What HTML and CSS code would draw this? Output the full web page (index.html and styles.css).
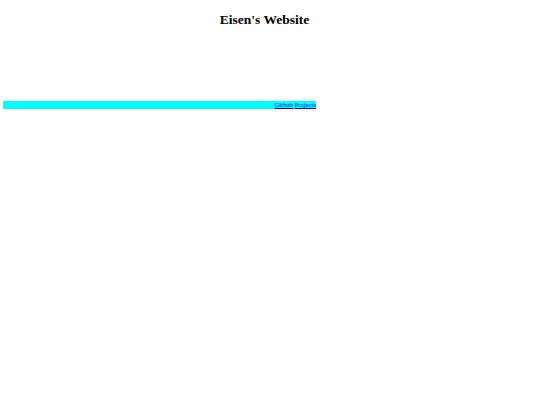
FILE: index.html
```html
<!DOCTYPE html>
<html>
<head>
<meta charset="utf-8">
<title>Eisen's Website</title>
<link rel="stylesheet" href="styles.css">
</head>
<body>
<div class="page">
  <h1 class="title">Eisen's Website</h1>
  <nav class="navbar">
    <a class="navlink" href="#">Github</a>
    <a class="navlink" href="#">Projects</a>
  </nav>
</div>
</body>
</html>
```
FILE: styles.css
```css
html, body {
  margin: 0;
  padding: 0;
  background: #ffffff;
}
.page {
  width: 529px;
  font-family: "Liberation Serif", "Times New Roman", serif;
}
.title {
  margin: 0;
  padding-top: 12px;
  font-size: 13.5px;
  font-weight: bold;
  text-align: center;
  color: #000;
  line-height: 16px;
}
.navbar {
  margin-top: 73px;
  margin-left: 3px;
  width: 313px;
  height: 8px;
  background: #00ffff;
  display: flex;
  justify-content: flex-end;
  align-items: center;
  gap: 1.5px;
}
.navlink {
  font-size: 6.7px;
  line-height: 8px;
  color: #0000ee;
  text-decoration: underline;
}
```
